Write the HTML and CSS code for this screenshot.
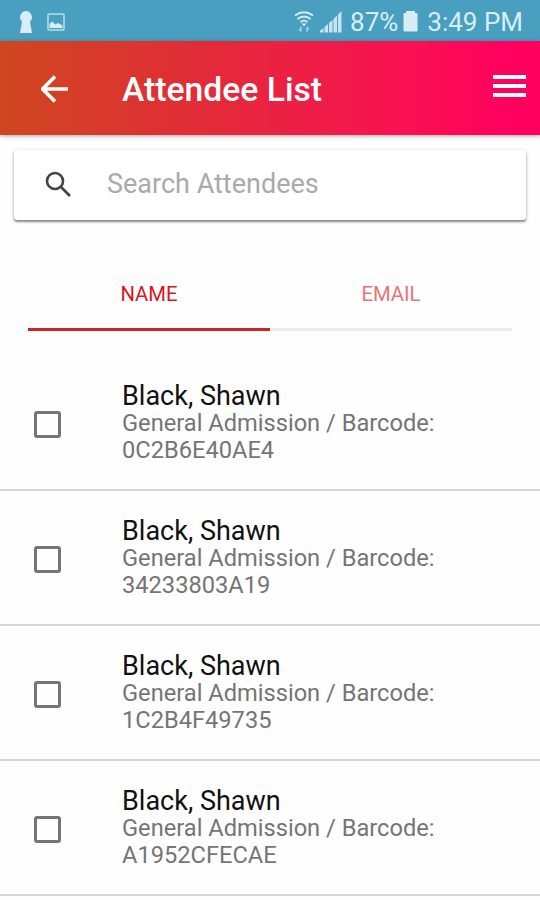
FILE: index.html
```
<!DOCTYPE html>
<html lang="en">
<head>
    <meta charset="utf-8">
    <title>Attendee List</title>
    <link rel="stylesheet" href="styles.css">
</head>
<body>
    <div class="statusbar">
        <svg class="icon_keyhole" width="14" height="22" viewBox="0 0 14 22">
            <path d="M7 0a6.300 6.300 0 0 1 4 10.800L13 22H1L3 10.800A6.300 6.300 0 0 1 7 0z" />
        </svg>
        <svg class="icon_image" width="18" height="18" viewBox="0 0 18 18">
            <rect x="1" y="1" width="16" height="16" rx="1" />
            <path d="M2.500 15V11L5 8.500l3.500 3 2.500-1.500 4.500 2.500v2.500z" />
        </svg>
        <div class="status_right">
            <svg class="icon_wifi" width="20" height="22" viewBox="0 0 20 22">
                <path d="M1 4.500q9-6.500 18 0M3.500 8q6.500-5 13 0M6.500 11q3.500-2.800 7 0" />
                <path class="dot" d="M7.500 12.500h5L10 15.500z" />
                <path class="arrows" d="M7 15.500v5M5 18l2 2.500M13 21v-5M15 18.500l-2-2.500" />
            </svg>
            <svg class="icon_signal" width="22" height="22" viewBox="0 0 22 22">
                <path d="M0 19.500L3.500 17v4.500H0zM4.500 16L8 13v8.500H4.500zM9 12l3.500-3v12.500H9zM13.500 8L17 4.500v17h-3.500zM18 3.500L21.500 0v21.500H18z" />
            </svg>
            <span class="battery_text">87%</span>
            <svg class="icon_battery" width="15" height="21" viewBox="0 0 15 21">
                <path d="M3 0h9v2h1.500a1 1 0 0 1 1 1v16.500a1 1 0 0 1-1 1h-12a1 1 0 0 1-1-1V3a1 1 0 0 1 1-1H3z" />
            </svg>
            <span class="clock">3:49 PM</span>
        </div>
    </div>

    <div class="header">
        <svg class="icon_back" width="28" height="28" viewBox="0 0 28 28">
            <path d="M27 14H2M14 1.500L1.500 14L14 26.500" />
        </svg>
        <h1>Attendee List</h1>
        <div class="menu">
            <span></span>
            <span></span>
            <span></span>
        </div>
    </div>

    <div class="search">
        <svg width="27" height="27" viewBox="0 0 27 27">
            <circle cx="10" cy="10" r="8" />
            <path d="M16 16l9 9" />
        </svg>
        <input type="text" placeholder="Search Attendees">
    </div>

    <div class="tabs">
        <div class="tab active"><span>NAME</span></div>
        <div class="tab"><span>EMAIL</span></div>
    </div>

    <div class="list">
        <div class="row">
            <div class="checkbox"></div>
            <div class="info">
                <div class="name">Black, Shawn</div>
                <div class="ticket">General Admission / Barcode:<br />0C2B6E40AE4</div>
            </div>
        </div>
        <div class="row">
            <div class="checkbox"></div>
            <div class="info">
                <div class="name">Black, Shawn</div>
                <div class="ticket">General Admission / Barcode:<br />34233803A19</div>
            </div>
        </div>
        <div class="row">
            <div class="checkbox"></div>
            <div class="info">
                <div class="name">Black, Shawn</div>
                <div class="ticket">General Admission / Barcode:<br />1C2B4F49735</div>
            </div>
        </div>
        <div class="row">
            <div class="checkbox"></div>
            <div class="info">
                <div class="name">Black, Shawn</div>
                <div class="ticket">General Admission / Barcode:<br />A1952CFECAE</div>
            </div>
        </div>
    </div>
</body>
</html>
```
FILE: styles.css
```
* {
    box-sizing: border-box;
}

body {
    margin: 0;
    height: 900px;
    overflow: hidden;
    font-family: Roboto, sans-serif;
    background-color: #fefefe;
}

svg {
    display: block;
    flex: none;
}

.statusbar {
    display: flex;
    align-items: center;
    height: 41px;
    padding: 2px 17px 0 19px;
    background-color: #489fbf;
    color: #d8edf6;
    fill: #d8edf6;
}

.icon_image {
    margin-left: 14px;
}

.icon_image rect {
    fill: none;
    stroke: #b9dfed;
    stroke-width: 1.5;
}

.status_right {
    display: flex;
    align-items: center;
    margin-left: auto;
    font-size: 26px;
}

.icon_wifi {
    fill: none;
    stroke: #d8edf6;
    stroke-width: 1.8;
}

.icon_wifi .dot {
    fill: #d8edf6;
    stroke: none;
}

.icon_wifi .arrows {
    stroke: #9fcfe0;
    stroke-width: 1.5;
}

.icon_signal {
    margin-left: 6px;
    fill: #c5e4ef;
}

.battery_text {
    margin-left: 8px;
}

.icon_battery {
    margin: 0 9px 0 5px;
}

.header {
    position: relative;
    display: flex;
    align-items: center;
    height: 94px;
    padding: 1px 14px 0 41px;
    background: linear-gradient(to right, #ce471f 0%, #e12d36 35%, #f91153 75%, #ff005e 95%);
    box-shadow: 0 1px 4px rgba(0, 0, 0, 0.35);
}

.icon_back {
    fill: none;
    stroke: #fff;
    stroke-width: 3.6;
}

h1 {
    margin: 2px auto 0 53px;
    font-size: 33.7px;
    font-weight: 500;
    color: #fff;
}

.menu {
    display: flex;
    flex-direction: column;
    gap: 5px;
    width: 33px;
    margin-top: -5px;
}

.menu span {
    height: 4px;
    background-color: #fff;
}

.search {
    display: flex;
    align-items: center;
    height: 70px;
    margin: 15px 14px 0;
    padding: 0 0 2px 31px;
    border-radius: 3px;
    background-color: #fff;
    box-shadow: 0 2px 2px rgba(0, 0, 0, 0.38), 0 1px 4px rgba(0, 0, 0, 0.18);
}

.search svg {
    fill: none;
    stroke: #444;
    stroke-width: 2.6;
}

.search input {
    flex: 1;
    min-width: 0;
    margin-left: 35px;
    padding: 0;
    border: 0;
    outline: 0;
    background: none;
    font-family: inherit;
    font-size: 27px;
}

.search input::placeholder {
    color: #aaa;
}

.tabs {
    display: flex;
    margin: 36px 28px 0 28px;
}

.tab {
    flex: 1;
    height: 75px;
    padding-top: 26px;
    border-bottom: 3px solid #ebebeb;
    font-size: 20.3px;
    line-height: 24px;
    text-align: center;
    color: #e87478;
}

.tab.active {
    border-color: #d32227;
    color: #d8161c;
}

.list {
    margin-top: 24px;
}

.row {
    display: flex;
    height: 135px;
    padding: 26px 0 0 34px;
    border-bottom: 2px solid #d5d5d5;
}

.row:first-child {
    height: 136px;
    padding-top: 27px;
}

.checkbox {
    width: 27px;
    height: 27px;
    margin-top: 29px;
    border: 3px solid #757575;
    border-radius: 3px;
}

.info {
    margin-left: 61px;
}

.name {
    font-size: 27px;
    line-height: 28px;
    color: #111;
}

.ticket {
    font-size: 23.65px;
    line-height: 27px;
    color: #757575;
}
```
